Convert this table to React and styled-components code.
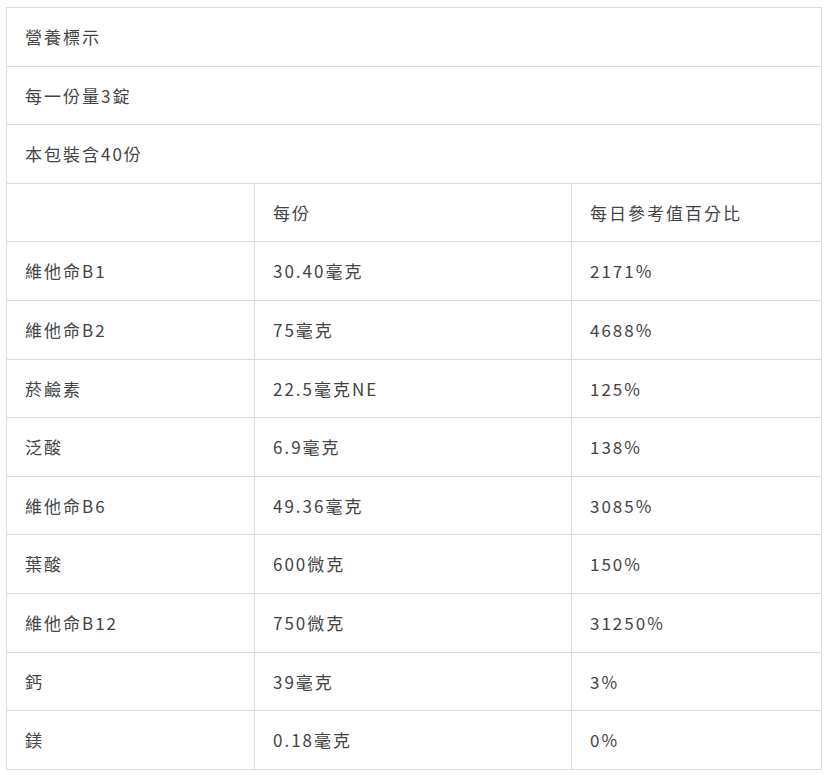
import React from "react";
import styled, { createGlobalStyle } from "styled-components";

const Global = createGlobalStyle`
  html, body { margin: 0; padding: 0; background: #fff; }
  body { font-family: "Noto Sans CJK TC", "Noto Sans", sans-serif; }
`;

const Wrap = styled.div`
  padding: 7px 0 0 6px;
`;

const Table = styled.table`
  border-collapse: collapse;
  table-layout: fixed;
  width: 815px;
  color: #444;
  font-size: 17px;
  letter-spacing: 2px;
`;

const Cell = styled.td`
  border: 1px solid #dcdcdc;
  padding: 16px 18px;
  line-height: 25.6px;
  text-align: left;
  font-weight: 400;
  vertical-align: middle;
`;

const rows = [
  ["維他命B1", "30.40毫克", "2171%"],
  ["維他命B2", "75毫克", "4688%"],
  ["菸鹼素", "22.5毫克NE", "125%"],
  ["泛酸", "6.9毫克", "138%"],
  ["維他命B6", "49.36毫克", "3085%"],
  ["葉酸", "600微克", "150%"],
  ["維他命B12", "750微克", "31250%"],
  ["鈣", "39毫克", "3%"],
  ["鎂", "0.18毫克", "0%"],
];

export default function App() {
  return (
    <>
      <Global />
      <Wrap>
        <Table>
          <colgroup>
            <col style={{ width: 248 }} />
            <col style={{ width: 317 }} />
            <col style={{ width: 250 }} />
          </colgroup>
          <tbody>
            <tr><Cell colSpan={3}>營養標示</Cell></tr>
            <tr><Cell colSpan={3}>每一份量3錠</Cell></tr>
            <tr><Cell colSpan={3}>本包裝含40份</Cell></tr>
            <tr>
              <Cell></Cell>
              <Cell>每份</Cell>
              <Cell>每日參考值百分比</Cell>
            </tr>
            {rows.map((r) => (
              <tr key={r[0]}>
                <Cell>{r[0]}</Cell>
                <Cell>{r[1]}</Cell>
                <Cell>{r[2]}</Cell>
              </tr>
            ))}
          </tbody>
        </Table>
      </Wrap>
    </>
  );
}
